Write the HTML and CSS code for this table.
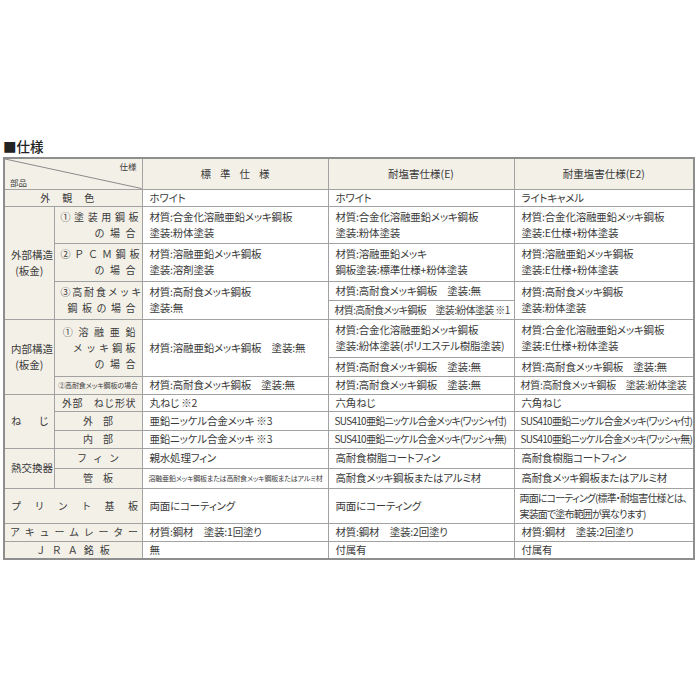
FILE: index.html
```html
<!DOCTYPE html>
<html lang="ja">
<head>
<meta charset="utf-8">
<link rel="stylesheet" href="styles.css">
</head>
<body>
<div class="page">
  <h2 class="title">■仕様</h2>
  <table class="spec">
    <colgroup>
      <col class="c1"><col class="c2"><col class="c3"><col class="c4"><col class="c5">
    </colgroup>
    <tr class="h31">
      <th colspan="2" class="diag">
        <svg class="diag-line" viewBox="0 0 100 100" preserveAspectRatio="none"><line x1="0" y1="0" x2="100" y2="100" stroke="#8a8a8a" stroke-width="1" vector-effect="non-scaling-stroke"/></svg>
        <span class="d-top">仕様</span>
        <span class="d-bot">部品</span>
      </th>
      <th class="hd"><span class="sp-std">標準仕様</span></th>
      <th class="hd">耐塩害仕様(E)</th>
      <th class="hd">耐重塩害仕様(E2)</th>
    </tr>
    <tr class="h17">
      <th colspan="2" class="lb c"><span class="sp-gai">外観色</span></th>
      <td>ホワイト</td><td>ホワイト</td><td>ライトキャメル</td>
    </tr>
    <tr class="h37">
      <th rowspan="4" class="lb grp">外部構造<br>(板金)</th>
      <th class="lb sub"><div class="ln"><span class="s36">①塗装用鋼板</span></div><div class="ln"><span class="s55">の場合</span></div></th>
      <td>材質:合金化溶融亜鉛メッキ鋼板<br>塗装:粉体塗装</td>
      <td>材質:合金化溶融亜鉛メッキ鋼板<br>塗装:粉体塗装</td>
      <td>材質:合金化溶融亜鉛メッキ鋼板<br>塗装:E仕様+粉体塗装</td>
    </tr>
    <tr class="h38">
      <th class="lb sub"><div class="ln"><span class="s38">②ＰＣＭ鋼板</span></div><div class="ln"><span class="s55">の場合</span></div></th>
      <td>材質:溶融亜鉛メッキ鋼板<br>塗装:溶剤塗装</td>
      <td>材質:溶融亜鉛メッキ<br>鋼板塗装:標準仕様+粉体塗装</td>
      <td>材質:溶融亜鉛メッキ鋼板<br>塗装:E仕様+粉体塗装</td>
    </tr>
    <tr class="h19">
      <th rowspan="2" class="lb sub"><div class="ln"><span class="s18">③高耐食メッキ</span></div><div class="ln"><span class="s45">鋼板の場合</span></div></th>
      <td rowspan="2">材質:高耐食メッキ鋼板<br>塗装:無</td>
      <td>材質:高耐食メッキ鋼板　塗装:無</td>
      <td rowspan="2">材質:高耐食メッキ鋼板<br>塗装:粉体塗装</td>
    </tr>
    <tr class="h19">
      <td class="tight">材質:高耐食メッキ鋼板　塗装:紛体塗装 ※1</td>
    </tr>
    <tr class="h38">
      <th rowspan="3" class="lb grp">内部構造<br>(板金)</th>
      <th rowspan="2" class="lb sub"><div class="ln"><span class="s57">①溶融亜鉛</span></div><div class="ln"><span class="s32">メッキ鋼板</span></div><div class="ln"><span class="s55">の場合</span></div></th>
      <td rowspan="2">材質:溶融亜鉛メッキ鋼板　塗装:無</td>
      <td>材質:合金化溶融亜鉛メッキ鋼板<br>塗装:紛体塗装(ポリエステル樹脂塗装)</td>
      <td>材質:合金化溶融亜鉛メッキ鋼板<br>塗装:E仕様+粉体塗装</td>
    </tr>
    <tr class="h19">
      <td>材質:高耐食メッキ鋼板　塗装:無</td>
      <td>材質:高耐食メッキ鋼板　塗装:無</td>
    </tr>
    <tr class="h18">
      <th class="lb sub tiny">②高耐食メッキ鋼板の場合</th>
      <td>材質:高耐食メッキ鋼板　塗装:無</td>
      <td>材質:高耐食メッキ鋼板　塗装:無</td>
      <td class="e2p">材質:高耐食メッキ鋼板　塗装:紛体塗装</td>
    </tr>
    <tr class="h17">
      <th rowspan="3" class="lb grp"><div class="j w38">ね じ</div></th>
      <th class="lb sub"><span class="neji">外部　ねじ形状</span></th>
      <td>丸ねじ ※2</td><td>六角ねじ</td><td>六角ねじ</td>
    </tr>
    <tr class="h19">
      <th class="lb mid">外　部</th>
      <td>亜鉛ニッケル合金メッキ ※3</td>
      <td class="sus">SUS410亜鉛ニッケル合金メッキ(ワッシャ付)</td>
      <td class="sus">SUS410亜鉛ニッケル合金メッキ(ワッシャ付)</td>
    </tr>
    <tr class="h18">
      <th class="lb mid">内　部</th>
      <td>亜鉛ニッケル合金メッキ ※3</td>
      <td class="sus">SUS410亜鉛ニッケル合金メッキ(ワッシャ無)</td>
      <td class="sus">SUS410亜鉛ニッケル合金メッキ(ワッシャ無)</td>
    </tr>
    <tr class="h20">
      <th rowspan="2" class="lb grp">熱交換器</th>
      <th class="lb mid"><span class="fin">フィン</span></th>
      <td>親水処理フィン</td><td>高耐食樹脂コートフィン</td><td>高耐食樹脂コートフィン</td>
    </tr>
    <tr class="h20">
      <th class="lb mid">管　板</th>
      <td class="small">溶融亜鉛メッキ鋼板または高耐食メッキ鋼板またはアルミ材</td>
      <td>高耐食メッキ鋼板またはアルミ材</td>
      <td>高耐食メッキ鋼板またはアルミ材</td>
    </tr>
    <tr class="h35">
      <th colspan="2" class="lb wide"><div class="j w127">プ リ ン ト 基 板</div></th>
      <td>両面にコーティング</td>
      <td>両面にコーティング</td>
      <td class="tight2">両面にコーティング(標準・耐塩害仕様とは、<br>実装面で塗布範囲が異なります)</td>
    </tr>
    <tr class="h18">
      <th colspan="2" class="lb wide"><span class="s48">アキュームレーター</span></th>
      <td>材質:鋼材　塗装:1回塗り</td>
      <td>材質:鋼材　塗装:2回塗り</td>
      <td>材質:鋼材　塗装:2回塗り</td>
    </tr>
    <tr class="h18">
      <th colspan="2" class="lb c"><span class="sp-jra">ＪＲＡ銘板</span></th>
      <td>無</td><td>付属有</td><td>付属有</td>
    </tr>
  </table>
</div>
</body>
</html>
```

FILE: styles.css
```css
* { box-sizing: border-box; }
html, body { margin: 0; padding: 0; background: #fff; }
body {
  font-family: "Noto Sans CJK JP", "Noto Sans", sans-serif;
  color: #3a3a3a;
}
.page { padding: 138px 5px 0 3px; }
.title {
  margin: 0 0 3px 0;
  font-size: 13.5px;
  line-height: 16px;
  font-weight: 500;
  color: #222;
}
.spec {
  width: 690px;
  table-layout: fixed;
  border-collapse: collapse;
  border: 2px solid #8e8e8e;
  font-size: 10px;
  line-height: 16px;
}
.c1 { width: 50px; }
.c2 { width: 88px; }
.c3 { width: 186px; }
.c4 { width: 186px; }
.c5 { width: 180px; }
.spec th, .spec td {
  border: 1px solid #a2a2a2;
  padding: 0 6px;
  vertical-align: middle;
  font-weight: 400;
  white-space: nowrap;
  overflow: hidden;
}
.spec td {
  text-align: left;
  padding: 0 1px 0 7px;
  background: #fff;
  font-size: 10.5px;
  letter-spacing: -0.2px;
  font-feature-settings: "palt";
}
.spec th { background: #f3f0e8; }
.h31 { height: 31px; }
.h17 { height: 17px; }
.h18 { height: 18px; }
.h19 { height: 19px; }
.h20 { height: 20px; }
.h35 { height: 35px; }
.h37 { height: 37px; }
.h38 { height: 38px; }

.hd { text-align: center; font-size: 10.5px; }
.sp-std { letter-spacing: 9px; margin-right: -9px; }
.diag { position: relative; padding: 0; }
.diag-line { position: absolute; left: 0; top: 0; width: 100%; height: 100%; }
.d-top { position: absolute; right: 5px; top: 2px; font-size: 8.5px; line-height: 10px; }
.d-bot { position: absolute; left: 5px; bottom: 2px; font-size: 8.5px; line-height: 10px; }

.lb.c { text-align: center; }
.sp-gai { letter-spacing: 12px; }
.sp-jra { letter-spacing: 6px; margin-right: -5px; }
.grp { text-align: center; padding: 0 3px; line-height: 16px; font-size: 10.5px; }
.sub { text-align: right; padding: 0 5px 0 0; }
.ln { line-height: 16px; }
.mid { text-align: center; padding-right: 10px; }
.fin { letter-spacing: 6px; margin-right: -6px; }
.neji { letter-spacing: 0.6px; margin-right: -0.6px; }
.spec th.tiny { font-size: 7px; padding: 0; text-align: center; letter-spacing: -0.1px; font-feature-settings: "palt"; }
.spec th.wide { padding: 0 3px 0 5px; text-align: left; }

.j {
  text-align: justify;
  text-align-last: justify;
  white-space: normal;
  margin: 0 auto;
}
.w38 { width: 38px; }
.w127 { width: 127px; margin: 0 0 0 1px; }

.s18 { letter-spacing: 1.8px; margin-right: -1.8px; }
.s32 { letter-spacing: 3.2px; margin-right: -3.2px; }
.s36 { letter-spacing: 3.6px; margin-right: -3.6px; }
.s38 { letter-spacing: 3.8px; margin-right: -3.8px; }
.s45 { letter-spacing: 4.5px; margin-right: -4.5px; }
.s55 { letter-spacing: 5.5px; margin-right: -5.5px; }
.s57 { letter-spacing: 5.7px; margin-right: -5.7px; }
.s48 { letter-spacing: 4.8px; margin-right: -4.8px; }

.spec td.sus { font-size: 10px; letter-spacing: -0.7px; padding-left: 6px; }
.spec td.tight { font-size: 10px; letter-spacing: -0.65px; padding-left: 6px; }
.spec td.tight2 { font-size: 10px; letter-spacing: -0.85px; padding-left: 5px; }
.spec td.e2p { font-size: 10px; letter-spacing: -0.3px; padding-left: 6px; }
.spec td.small { font-size: 7px; padding-left: 6px; letter-spacing: -0.2px; }
```
